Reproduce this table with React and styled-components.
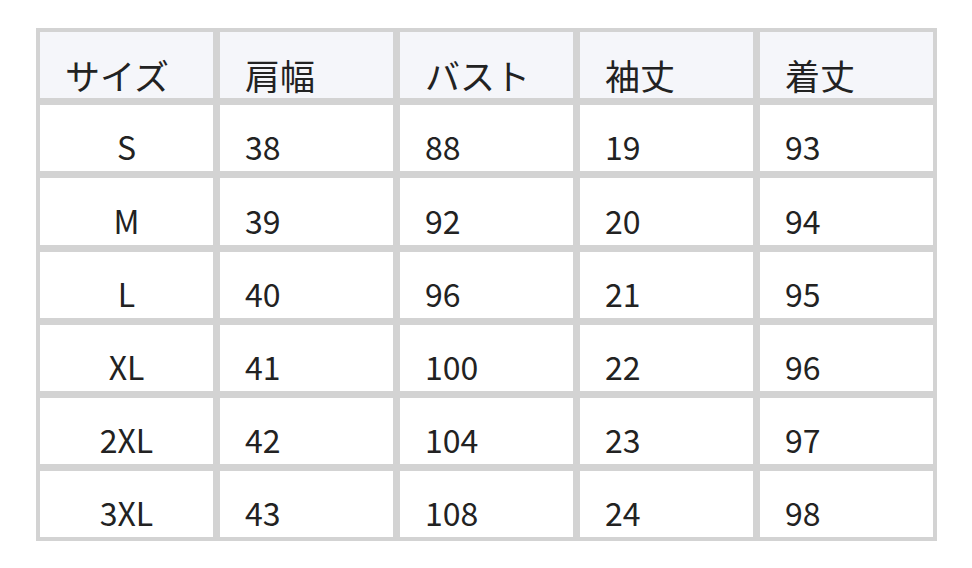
import React from 'react';
import styled, { createGlobalStyle } from 'styled-components';

const GlobalStyle = createGlobalStyle`
  body {
    margin: 0;
    background: #ffffff;
    font-family: "Noto Sans CJK JP", "Noto Sans", sans-serif;
    color: #222222;
  }
`;

const Page = styled.div`
  padding: 28px 0 0 36px;
`;

const SizeTable = styled.div`
  display: grid;
  grid-template-columns: repeat(5, 173px);
  grid-auto-rows: 66.2px;
  gap: 7px;
  width: max-content;
  padding: 4px;
  background: #d3d3d3;
`;

const Cell = styled.div`
  display: flex;
  align-items: flex-end;
  justify-content: ${(p) => (p.$center ? 'center' : 'flex-start')};
  padding: 0 0 ${(p) => (p.$head ? '6px' : '9px')} ${(p) => (p.$center ? '0' : '25px')};
  background: ${(p) => (p.$head ? '#f5f6fa' : '#ffffff')};
  font-size: ${(p) => (p.$head ? '35px' : '32px')};
  line-height: 1;
  white-space: nowrap;
`;

const headers = ['サイズ', '肩幅', 'バスト', '袖丈', '着丈'];

const rows = [
  ['S', 38, 88, 19, 93],
  ['M', 39, 92, 20, 94],
  ['L', 40, 96, 21, 95],
  ['XL', 41, 100, 22, 96],
  ['2XL', 42, 104, 23, 97],
  ['3XL', 43, 108, 24, 98],
];

export default function App() {
  return (
    <Page>
      <GlobalStyle />
      <SizeTable>
        {headers.map((h) => (
          <Cell key={h} $head>{h}</Cell>
        ))}
        {rows.map((r) =>
          r.map((v, i) => (
            <Cell key={r[0] + '-' + i} $center={i === 0}>{v}</Cell>
          ))
        )}
      </SizeTable>
    </Page>
  );
}
